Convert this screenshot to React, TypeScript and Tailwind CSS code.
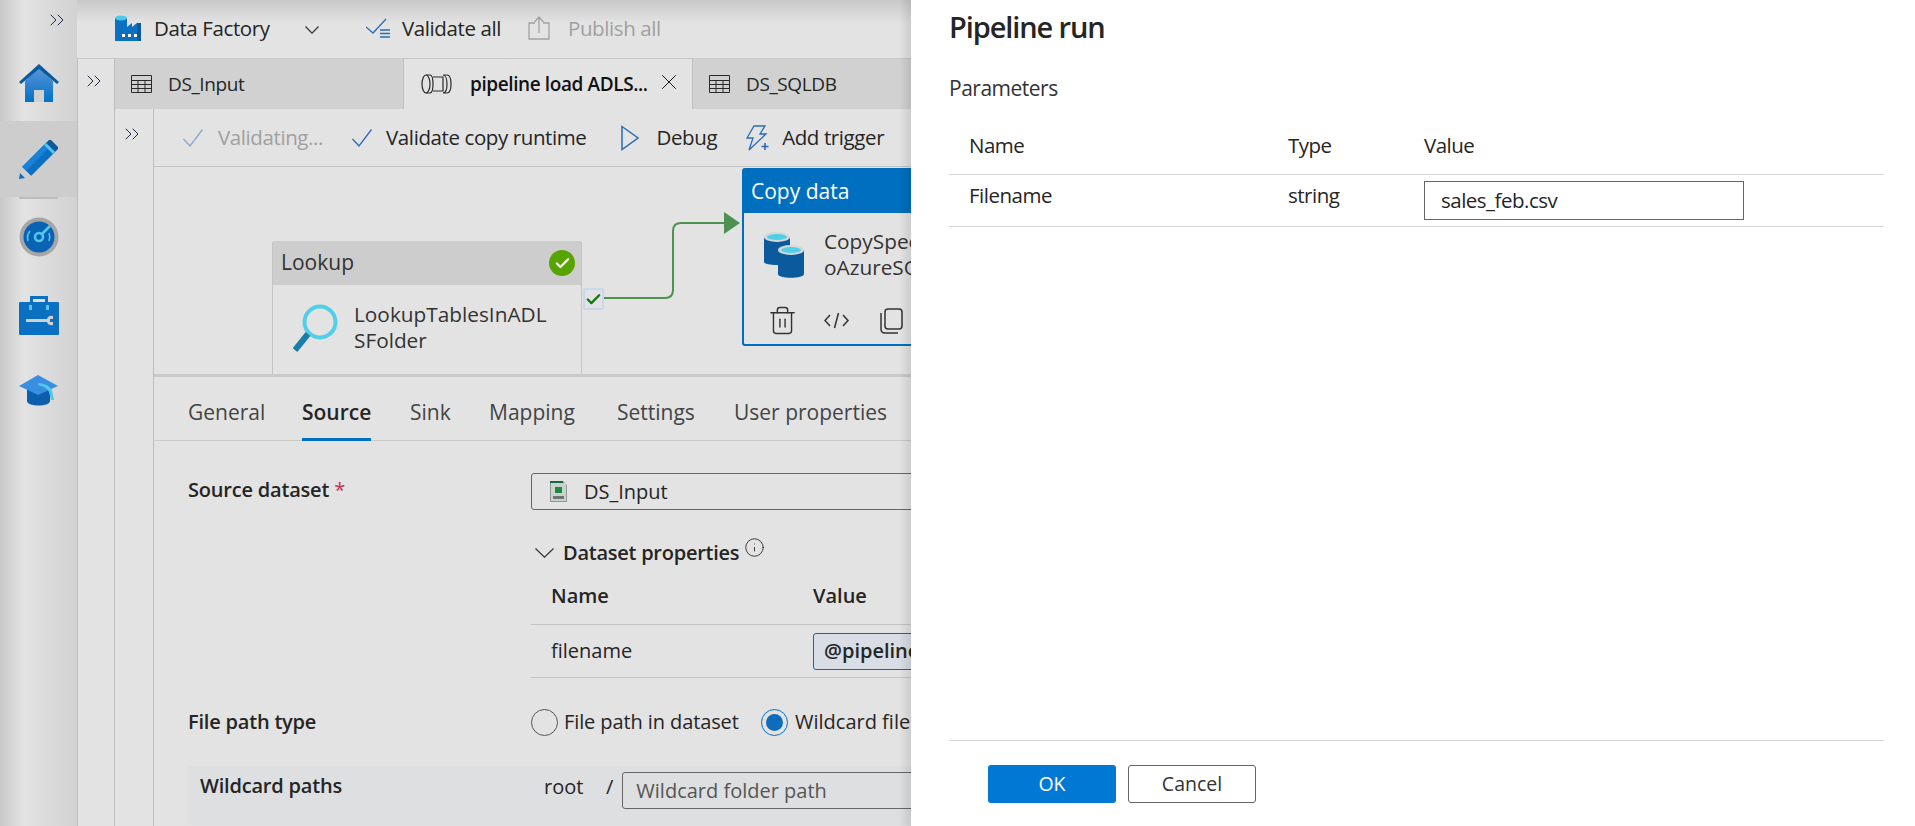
import { Check, ChevronsRight, Info, Trash2, X } from 'lucide-react';

const PANEL_TABS = [
  { label: 'General', width: 'w-[114px]' },
  { label: 'Source', width: 'w-[108px]', active: true },
  { label: 'Sink', width: 'w-[79px]' },
  { label: 'Mapping', width: 'w-[128px]' },
  { label: 'Settings', width: 'w-[117px]' },
  { label: 'User properties', width: 'w-[160px]' },
];

function HomeIcon() {
  return (
    <svg width="40" height="38" viewBox="0 0 40 38">
      <defs>
        <linearGradient id="homeFill" x1="0" y1="0" x2="0" y2="1">
          <stop offset="0" stopColor="#5b94d8" />
          <stop offset="1" stopColor="#0072c6" />
        </linearGradient>
      </defs>
      <path d="M6 17 20 4l14 13v21H6z" fill="url(#homeFill)" />
      <path d="M0 18 20 0l20 18-2 2L20 5 2 20z" fill="#0b5a9e" />
      <rect x="15" y="26" width="10" height="12" fill="#d0d0d0" />
    </svg>
  );
}

function PencilIcon() {
  return (
    <svg width="40" height="39" viewBox="0 0 40 39">
      <path d="M3 27 27 3l9 9-24 24z" fill="#0b6fc2" />
      <path d="M3 27 27 3l4 4L7 31z" fill="#1a82d6" />
      <path d="M27 3l3-3h2l7 7v2l-3 3z" fill="#0b5a9e" />
      <path d="M25 5l2-2 9 9-2 2z" fill="#50c8e8" />
      <path d="M3 27l9 9-12 3z" fill="#cfcfcf" />
      <path d="M1 33l5 5-6 1z" fill="#0b6fc2" />
    </svg>
  );
}

function GaugeIcon() {
  return (
    <svg width="40" height="40" viewBox="0 0 40 40">
      <circle cx="20" cy="20" r="19.5" fill="#a6a6a6" />
      <circle cx="20" cy="20" r="15.5" fill="#0a62b4" />
      <path d="M9 24a11 11 0 0 1 2-10" fill="none" stroke="#50c8e8" strokeWidth="1.6" />
      <path d="M30 16a11 11 0 0 1 0 8" fill="none" stroke="#50c8e8" strokeWidth="1.6" />
      <circle cx="20" cy="20" r="4" fill="none" stroke="#50c8e8" strokeWidth="2.6" />
      <path d="M22 18l9-9" stroke="#50c8e8" strokeWidth="2.6" />
    </svg>
  );
}

function ToolboxIcon() {
  return (
    <svg width="40" height="40" viewBox="0 0 40 40">
      <path d="M11 7V1h18v6h-3V4H14v3z" fill="#0b6fc2" />
      <rect x="0" y="7" width="40" height="33" rx="1" fill="#0b6fc2" />
      <rect x="10" y="10" width="3" height="5" fill="#50c8e8" />
      <rect x="27" y="10" width="3" height="5" fill="#50c8e8" />
      <path d="M7 24h21a5 5 0 0 1 6-3v3h-3v3h3v3a5 5 0 0 1-6-3H7z" fill="#d0d0d0" />
    </svg>
  );
}

function CapIcon() {
  return (
    <svg width="39" height="31" viewBox="0 0 39 31">
      <path d="M8 14h23v12c0 6-23 6-23 0z" fill="#0b5fae" />
      <path d="M0 11 19 0l20 11-20 9z" fill="#3a8ee0" />
      <path d="M19 8c6 0 12 3 14 7l2 10h-3l-2-8c-2-4-7-6-11-7z" fill="#50c8e8" />
    </svg>
  );
}

function FactoryIcon() {
  return (
    <svg width="26" height="26" viewBox="0 0 26 26">
      <path d="M0 3h12v9l5-4v4l5-4v18H0z" fill="#0b6fc2" />
      <path d="M22 8l4 0v18h-4z" fill="#0b5a9e" />
      <ellipse cx="6" cy="3" rx="6" ry="2.6" fill="#50c8e8" />
      <rect x="7" y="19" width="3" height="3" fill="#fff" />
      <rect x="13" y="19" width="3" height="3" fill="#fff" />
      <rect x="19" y="19" width="3" height="3" fill="#fff" />
    </svg>
  );
}

function ValidateAllIcon() {
  return (
    <svg width="24" height="21" viewBox="0 0 24 21" fill="none">
      <path d="M0 9l7 6L20 1" stroke="#2b6cb8" strokeWidth="1.3" />
      <path d="M14 12h10M14 15.5h10M14 19h10" stroke="#2b6cb8" strokeWidth="1.6" />
    </svg>
  );
}

function PublishIcon() {
  return (
    <svg width="22" height="24" viewBox="0 0 22 24" fill="none" stroke="#a3a3a3" strokeWidth="1.3">
      <path d="M7 7H1v16h20V7h-6" />
      <path d="M11 17V1M6.5 6 11 1l4.5 5" />
    </svg>
  );
}

function GridIcon() {
  return (
    <svg width="21" height="18" viewBox="0 0 21 18" fill="none" stroke="#2a2a2a" strokeWidth="1">
      <path d="M.5.5h20v17H.5zM.5 5.5h20M.5 9.5h20M.5 13.5h20M7 5.5v12M14 5.5v12" />
    </svg>
  );
}

function PipelineIcon() {
  return (
    <svg width="31" height="20" viewBox="0 0 31 20" fill="none" stroke="#2a2a2a" strokeWidth="1.2">
      <ellipse cx="5" cy="10" rx="4" ry="9" />
      <path d="M5 1h4c2 0 3 4 3 9s-1 9-3 9H5" />
      <path d="M12 3h10v14H12" />
      <path d="M22 1h4c2.500 0 4 4 4 9s-1.500 9-4 9h-4c2.500 0 4-4 4-9s-1.500-9-4-9z" />
    </svg>
  );
}

function TriggerIcon() {
  return (
    <svg width="24" height="26" viewBox="0 0 24 26" fill="none" stroke="#2b6cb8" strokeWidth="1.3">
      <path d="M8 1h11l-5 8h6L3 25l4-12H1z" />
      <path d="M19 18v7M15.500 21.500h7" strokeWidth="1.6" />
    </svg>
  );
}

function CheckGlyph({ className }: { className: string }) {
  return (
    <svg width="20" height="18" viewBox="0 0 20 18" fill="none" stroke="currentColor" strokeWidth="1.3" className={className}>
      <path d="M0.500 10l6.500 7L19.500 0.500" />
    </svg>
  );
}

function PlayGlyph() {
  return (
    <svg width="18" height="26" viewBox="0 0 18 26" fill="none" stroke="#2b6cb8" strokeWidth="1.5">
      <path d="M1 1.500 17 13 1 24.500z" />
    </svg>
  );
}

function ChevronGlyph({ width, height, className }: { width: number; height: number; className?: string }) {
  return (
    <svg width={width} height={height} viewBox={`0 0 ${width} ${height}`} fill="none" stroke="#333" strokeWidth="1.2" className={className}>
      <path d={`M0.500 0.500 ${width / 2} ${height - 0.8} ${width - 0.5} 0.500`} />
    </svg>
  );
}

function CodeGlyph() {
  return (
    <svg width="25" height="17" viewBox="0 0 25 17" fill="none" stroke="#333" strokeWidth="1.5">
      <path d="M6 3 1 8.500 6 14M19 3l5 5.500-5 5.500M14.500 1l-4 15" />
    </svg>
  );
}

function CopyGlyph() {
  return (
    <svg width="23" height="26" viewBox="0 0 23 26" fill="none" stroke="#333" strokeWidth="1.5">
      <rect x="5" y="1" width="17" height="20" rx="3" />
      <path d="M1 5v16c0 2.500 1.500 4 4 4h13" />
    </svg>
  );
}

function MagnifierIcon() {
  return (
    <svg width="45" height="48" viewBox="0 0 45 48" fill="none">
      <circle cx="27" cy="18" r="15.500" stroke="#4fd0e8" strokeWidth="4" />
      <path d="M15 30 2 46" stroke="#1a7fa8" strokeWidth="6" />
    </svg>
  );
}

function DatabasesIcon() {
  return (
    <svg width="40" height="46" viewBox="0 0 40 46" className="shrink-0">
      <path d="M0 5h26v25c0 4-26 4-26 0z" fill="#0b5a9e" />
      <ellipse cx="13" cy="5" rx="13" ry="5" fill="#d7d7d7" />
      <ellipse cx="13" cy="5" rx="10" ry="3" fill="#4fd0e8" />
      <path d="M14 18h26v24c0 5-26 5-26 0z" fill="#0b5a9e" />
      <ellipse cx="27" cy="18" rx="13" ry="5" fill="#d7d7d7" />
      <ellipse cx="27" cy="18" rx="10" ry="3" fill="#4fd0e8" />
    </svg>
  );
}

function CsvIcon() {
  return (
    <svg width="17" height="21" viewBox="0 0 17 21">
      <path d="M0 0h13l4 4v17H0z" fill="#8f9a92" />
      <path d="M1 2h15v18H1z" fill="#c9d2cc" />
      <rect x="5" y="6" width="7" height="6" fill="#1f8a3c" />
      <rect x="0" y="0" width="13" height="2" fill="#14693a" />
      <rect x="3" y="15" width="11" height="3" fill="#6d7670" />
    </svg>
  );
}

function ToolbarAction({ icon, label, muted, className }: { icon: React.ReactNode; label: string; muted?: boolean; className: string }) {
  return (
    <div className={`flex items-center ${className}`}>
      {icon}
      <span className={`whitespace-nowrap ${muted ? 'text-[#a0a0a0]' : 'text-[#252525]'}`}>{label}</span>
    </div>
  );
}

function NavRail() {
  return (
    <div className="flex w-[77px] shrink-0 flex-col bg-linear-to-r from-[#c9c9c9] via-[#e3e3e3] via-30% to-[#d2d2d2]">
      <div className="flex h-[64px] justify-end pt-[8px] pr-[8px]">
        <ChevronsRight size={24} strokeWidth={1} className="text-[#1f2a44]" />
      </div>
      <div className="flex h-[57px] justify-center">
        <HomeIcon />
      </div>
      <div className="flex h-[76px] items-start justify-center bg-[#cdcdcd] pt-[19px]">
        <PencilIcon />
      </div>
      <div className="mx-[19px] h-[2px] bg-[#bdbdbd]" />
      <div className="flex h-[96px] justify-center pt-[18px]">
        <GaugeIcon />
      </div>
      <div className="flex h-[80px] justify-center">
        <ToolboxIcon />
      </div>
      <div className="flex justify-center">
        <CapIcon />
      </div>
    </div>
  );
}

function TopBar() {
  return (
    <div className="flex h-[58px] shrink-0 items-center bg-linear-to-b from-[#c9c9c9] via-[#e3e3e3] via-40% to-[#e3e3e3] pb-[2px] text-[20.5px] tracking-[-0.4px]">
      <div className="ml-[38px] flex items-center">
        <FactoryIcon />
        <span className="ml-[13px] w-[114px] whitespace-nowrap text-[#252525]">Data Factory</span>
        <ChevronGlyph width={14} height={8} className="ml-[37px] translate-y-[2px]" />
      </div>
      <ToolbarAction className="ml-[47px] gap-[12px]" icon={<ValidateAllIcon />} label="Validate all" />
      <ToolbarAction className="ml-[27px] gap-[18px]" icon={<PublishIcon />} label="Publish all" muted />
    </div>
  );
}

function EditorTabs() {
  return (
    <div className="flex h-[51px] shrink-0 border-t border-t-[#c8c8c8] text-[19px] tracking-[-0.4px]">
      <div className="flex w-[289px] items-center gap-[16px] border-r border-r-[#bdbdbd] bg-[#d1d1d1] pl-[16px] text-[#252525]">
        <GridIcon />
        DS_Input
      </div>
      <div className="flex w-[289px] items-center border-r border-r-[#bdbdbd] pl-[17px] text-[#111]">
        <PipelineIcon />
        <span className="ml-[18px] w-[178px] font-semibold whitespace-nowrap">pipeline load ADLS...</span>
        <X size={26} strokeWidth={0.9} className="ml-[8px] -translate-y-[2px]" />
      </div>
      <div className="flex flex-1 items-center gap-[16px] bg-[#d1d1d1] pl-[16px] text-[#252525]">
        <GridIcon />
        DS_SQLDB
      </div>
    </div>
  );
}

function PipelineToolbar() {
  return (
    <div className="flex h-[58px] shrink-0 items-center border-b border-b-[#c4c4c4] text-[20.5px] tracking-[-0.4px]">
      <ToolbarAction className="ml-[29px] gap-[15px]" icon={<CheckGlyph className="text-[#86a9cc]" />} label="Validating..." muted />
      <ToolbarAction className="ml-[29px] gap-[14px]" icon={<CheckGlyph className="text-[#2b6cb8]" />} label="Validate copy runtime" />
      <ToolbarAction className="ml-[35px] gap-[17px]" icon={<PlayGlyph />} label="Debug" />
      <ToolbarAction className="ml-[29px] gap-[12px]" icon={<TriggerIcon />} label="Add trigger" />
    </div>
  );
}

function Canvas() {
  return (
    <div className="relative h-[210px] shrink-0 overflow-hidden border-b-[3px] border-b-[#cacaca]">
      {/* Lookup activity */}
      <div className="absolute top-[74px] left-[118px] h-[140px] w-[310px] rounded-t-[3px] border-x border-x-[#c4c4c4]">
        <div className="flex h-[44px] items-center justify-between bg-[#cdcdcd] pr-[6px] pl-[8px] text-[21px] text-[#333]">
          Lookup
          <div className="flex h-[26px] w-[26px] items-center justify-center rounded-full bg-[#57a300]">
            <Check size={17} strokeWidth={3.2} className="text-white" />
          </div>
        </div>
        <div className="flex pt-[16px] pl-[20px]">
          <div className="pt-[3px]">
            <MagnifierIcon />
          </div>
          <div className="ml-[16px] text-[20.8px] leading-[26px] whitespace-nowrap text-[#333]">
            LookupTablesInADL
            <br />
            SFolder
          </div>
        </div>
      </div>
      <div className="absolute top-[121px] left-[429px] flex h-[22px] w-[21px] items-center justify-center rounded-[2px] border-2 border-[#c6d8ec]">
        <Check size={17} strokeWidth={3.4} className="text-[#107c10]" />
      </div>
      {/* Success link */}
      <svg className="absolute top-[44px] left-[449px]" width="140" height="90" viewBox="0 0 140 90" fill="none">
        <path d="M1 87H62q8 0 8-8V20q0-8 8-8H124" stroke="#4f9150" strokeWidth="2" />
        <path d="M121 1l16 11-16 11z" fill="#4f9150" />
      </svg>
      {/* Copy data activity, selected */}
      <div className="absolute top-[1px] left-[588px] h-[178px] w-[240px] rounded-[3px] border-2 border-[#006fc0]">
        <div className="flex h-[43px] items-center bg-[#006fc0] pl-[7px] text-[21px] text-white">Copy data</div>
        <div className="flex pt-[19px] pl-[20px]">
          <DatabasesIcon />
          <div className="ml-[20px] -translate-y-[4px] text-[20.8px] leading-[26px] whitespace-nowrap text-[#333]">
            CopySpecificFilesT
            <br />
            oAzureSQL
          </div>
        </div>
        <div className="mt-[21px] flex items-center pl-[23px]">
          <Trash2 size={31} strokeWidth={1.1} className="text-[#333]" />
          <div className="ml-[26px]">
            <CodeGlyph />
          </div>
          <div className="ml-[31px]">
            <CopyGlyph />
          </div>
        </div>
      </div>
    </div>
  );
}

function PanelTabs() {
  return (
    <div className="ml-[1px] flex h-[64px] shrink-0 border-b border-b-[#cacaca] pl-[33px] text-[21px]">
      {PANEL_TABS.map((tab) => (
        <div key={tab.label} className={`${tab.width} shrink-0`}>
          <div
            className={`inline-block h-[64px] pt-[20px] whitespace-nowrap ${
              tab.active ? 'border-b-[3px] border-b-[#006fc0] font-semibold text-[#252525]' : 'text-[#444]'
            }`}
          >
            {tab.label}
          </div>
        </div>
      ))}
    </div>
  );
}

function SourceForm() {
  return (
    <div className="flex-1 overflow-hidden pt-[32px] text-[20px] text-[#252525]">
      <div className="flex pl-[34px]">
        <div className="w-[343px] shrink-0 pt-[2px] font-semibold tracking-[-0.2px]">
          Source dataset <span className="font-normal text-[#c4314b]">*</span>
        </div>
        <div className="min-w-0 flex-1">
          <div className="flex h-[37px] w-[500px] items-center gap-[17px] rounded-[3px] border border-[#666] pl-[18px]">
            <CsvIcon />
            DS_Input
          </div>
          <div className="mt-[28px] flex items-center">
            <ChevronGlyph width={19} height={10} className="ml-[4px]" />
            <span className="ml-[9px] font-semibold tracking-[-0.25px]">Dataset properties</span>
            <Info size={21} strokeWidth={1} className="ml-[5px] -translate-y-[6px]" />
          </div>
          <div className="mt-[5px] flex h-[52px] w-[500px] items-center border-b border-b-[#c4c4c4] pb-[6px] pl-[20px] font-semibold">
            <span className="w-[262px] shrink-0">Name</span>
            Value
          </div>
          <div className="flex h-[53px] w-[500px] items-center border-b border-b-[#c4c4c4] pl-[20px]">
            <span className="w-[262px] shrink-0">filename</span>
            <div className="flex h-[37px] flex-1 items-center overflow-hidden rounded-[3px] border border-[#006fc0] bg-[#d8dde6] pl-[10px] font-semibold whitespace-nowrap">
              @pipeline().parameters.Filename
            </div>
          </div>
        </div>
      </div>
      <div className="mt-[29px] flex pl-[34px]">
        <div className="flex w-[343px] shrink-0 items-center font-semibold tracking-[-0.2px]">File path type</div>
        <div className="flex items-center whitespace-nowrap">
          <div className="h-[27px] w-[27px] shrink-0 rounded-full border border-[#555]" />
          <span className="ml-[6px] w-[197px] shrink-0 tracking-[-0.1px]">File path in dataset</span>
          <div className="flex h-[27px] w-[27px] shrink-0 items-center justify-center rounded-full border border-[#0f6cbd]">
            <div className="h-[17px] w-[17px] rounded-full bg-[#0f6cbd]" />
          </div>
          <span className="ml-[7px]">Wildcard file path</span>
        </div>
      </div>
      <div className="mt-[29px] ml-[33px] flex h-[59px] bg-[#dedfe1]">
        <div className="w-[357px] shrink-0 pt-[5px] pl-[13px] font-semibold tracking-[-0.2px]">Wildcard paths</div>
        <span className="w-[40px] shrink-0 pt-[6px]">root</span>
        <span className="ml-[22px] shrink-0 pt-[6px]">/</span>
        <div className="mt-[6px] ml-[9px] flex h-[37px] w-[400px] shrink-0 items-center rounded-[3px] border border-[#666] pl-[13px] text-[#555]">
          Wildcard folder path
        </div>
      </div>
    </div>
  );
}

function PipelineRunDialog() {
  return (
    <div className="flex w-[1004px] shrink-0 flex-col bg-white pr-[31px] pl-[38px] text-[#252525]">
      <div className="pt-[7px] text-[29px] leading-[40px] font-semibold tracking-[-1.1px]">Pipeline run</div>
      <div className="mt-[28px] text-[21px] leading-[26px] tracking-[-0.5px] text-[#333]">Parameters</div>
      <div className="mt-[27px] flex h-[47px] items-center border-b border-b-[#d6d6d6] pb-[12px] pl-[20px] text-[20.5px] font-medium tracking-[-0.5px]">
        <span className="w-[319px]">Name</span>
        <span className="w-[136px]">Type</span>
        Value
      </div>
      <div className="flex h-[52px] items-center border-b border-b-[#d6d6d6] pl-[20px] text-[20.5px] tracking-[-0.5px]">
        <span className="w-[319px] -translate-y-[5px]">Filename</span>
        <span className="w-[136px] -translate-y-[5px]">string</span>
        <div className="flex h-[39px] w-[320px] items-center border border-[#666] pl-[16px]">sales_feb.csv</div>
      </div>
      <div className="flex-1" />
      <div className="flex h-[86px] gap-[12px] border-t border-t-[#d6d6d6] pt-[24px] pl-[39px]">
        <button className="h-[38px] w-[128px] rounded-[3px] bg-[#0078d4] text-[19.5px] text-white">OK</button>
        <button className="h-[38px] w-[128px] rounded-[3px] border border-[#666] text-[19.5px] text-[#333]">Cancel</button>
      </div>
    </div>
  );
}

export default function App() {
  return (
    <div className="flex h-[826px] w-[1915px] overflow-hidden font-['Open_Sans',sans-serif]">
      <div className="relative flex w-[911px] shrink-0 overflow-hidden bg-[#e3e3e3]">
        <NavRail />
        <div className="flex min-w-0 flex-1 flex-col">
          <TopBar />
          <div className="flex min-h-0 flex-1">
            <div className="w-[38px] shrink-0 border-x border-x-[#bdbdbd] border-t border-t-[#c8c8c8] pt-[10px] pl-[4px]">
              <ChevronsRight size={24} strokeWidth={1} className="text-[#1f2a44]" />
            </div>
            <div className="flex min-w-0 flex-1 flex-col">
              <EditorTabs />
              <div className="flex min-h-0 flex-1">
                <div className="w-[39px] shrink-0 border-r border-r-[#bdbdbd] pt-[13px] pl-[5px]">
                  <ChevronsRight size={24} strokeWidth={1} className="text-[#1f2a44]" />
                </div>
                <div className="flex min-w-0 flex-1 flex-col">
                  <PipelineToolbar />
                  <Canvas />
                  <PanelTabs />
                  <SourceForm />
                </div>
              </div>
            </div>
          </div>
        </div>
        {/* dialog's drop shadow falling on the page */}
        <div className="absolute inset-y-0 right-0 w-[12px] bg-linear-to-r from-transparent to-black/10" />
      </div>
      <PipelineRunDialog />
    </div>
  );
}
